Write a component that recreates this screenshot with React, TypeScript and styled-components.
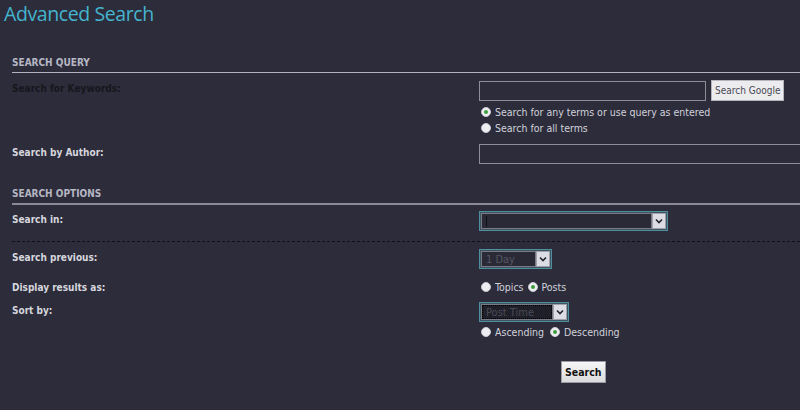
import React from "react";
import styled, { createGlobalStyle } from "styled-components";

const Global = createGlobalStyle`
  html, body { margin: 0; padding: 0; background: #2c2c3a; }
  body {
    width: 800px; height: 410px; overflow: hidden;
    font-family: "DejaVu Sans Condensed", "DejaVu Sans", sans-serif;
  }
`;

const Page = styled.div`
  width: 800px;
  height: 410px;
  background: #2c2c3a;
  overflow: hidden;
`;

const Title = styled.h1`
  margin: 0;
  padding: 0 0 0 4px;
  font-family: "Open Sans", sans-serif;
  font-weight: 400;
  font-size: 19.5px;
  line-height: 28px;
  color: #45b5cf;
  letter-spacing: -0.4px;
`;

const Form = styled.div`
  padding-left: 12px;
`;

const SectionHead = styled.div<{ $mt: number; $thick?: boolean }>`
  margin-top: ${(p) => p.$mt}px;
  font-size: 10px;
  font-weight: 700;
  line-height: 13px;
  text-transform: uppercase;
  color: #b6b6c4;
  padding-bottom: 3px;
  border-bottom: ${(p) => (p.$thick ? "2px solid #8a8a96" : "1px solid #b4b4c0")};
`;

const Row = styled.div<{ $mt: number }>`
  display: grid;
  grid-template-columns: 467px 1fr;
  margin-top: ${(p) => p.$mt}px;
`;

const Label = styled.div<{ $dark?: boolean }>`
  font-weight: 700;
  font-size: 10px;
  line-height: 14px;
  padding-top: 2px;
  color: ${(p) => (p.$dark ? "#16161d" : "#d6d6de")};
`;

const Field = styled.div`
  display: flex;
  flex-direction: column;
  align-items: flex-start;
`;

const InputLine = styled.div`
  display: flex;
  align-items: center;
  gap: 5px;
`;

const TextBox = styled.div<{ $w: number }>`
  box-sizing: border-box;
  width: ${(p) => p.$w}px;
  height: 20px;
  border: 1px solid #8e8e9a;
  background: transparent;
`;

const GoogleButton = styled.button`
  box-sizing: border-box;
  height: 21px;
  padding: 0 3px;
  background: #ececef;
  border: 1px solid #b4b4bc;
  color: #4a4a54;
  font-family: "DejaVu Sans Condensed", "DejaVu Sans", sans-serif;
  font-size: 10px;
`;

const RadioLine = styled.div<{ $mt?: number }>`
  display: flex;
  align-items: center;
  height: 16px;
  margin-top: ${(p) => p.$mt ?? 0}px;
  margin-left: 2px;
  font-size: 10.5px;
  color: #d2d2da;
`;

const Radio = styled.span<{ $on?: boolean; $ml?: number }>`
  box-sizing: border-box;
  width: 10px;
  height: 10px;
  border-radius: 50%;
  background: #eeeef2;
  border: 1px solid #c8c8d0;
  display: inline-flex;
  align-items: center;
  justify-content: center;
  margin-left: ${(p) => p.$ml ?? 0}px;
  margin-right: 4px;
  &::after {
    content: "";
    display: ${(p) => (p.$on ? "block" : "none")};
    width: 4px;
    height: 4px;
    border-radius: 50%;
    background: #3c9c3c;
  }
`;

const Select = styled.div<{ $w: number }>`
  box-sizing: border-box;
  width: ${(p) => p.$w}px;
  height: 20px;
  border: 1px solid #4f8e9e;
  padding: 1px;
  background: #3d5560;
  display: flex;
`;

const SelectInner = styled.div<{ $focus?: boolean }>`
  flex: 1;
  display: flex;
  align-items: center;
  background: ${(p) => (p.$focus ? "#1f1f29" : "#2a2a36")};
  border: 1px solid #7a7a86;
  outline: ${(p) => (p.$focus ? "1px dotted #000" : "none")};
  outline-offset: -2px;
  font-size: 11px;
  color: ${(p) => (p.$focus ? "#4a4a56" : "#555562")};
  padding-left: 4px;
  min-width: 0;
`;

const Caret = styled.span`
  display: inline-block;
  width: 1px;
  height: 11px;
  background: #0e0e14;
`;

const ArrowBox = styled.div`
  box-sizing: border-box;
  width: 14px;
  background: #dcdce4;
  border: 1px solid #a0a0aa;
  display: flex;
  align-items: center;
  justify-content: center;
`;

const Dashed = styled.div`
  margin-top: 10px;
  border-top: 1px dashed #101018;
`;

const SubmitRow = styled.div`
  margin-top: 21px;
  padding-left: 549px;
`;

const SubmitButton = styled.button`
  box-sizing: border-box;
  height: 22px;
  padding: 0 3px;
  background: linear-gradient(#f6f6f6, #dcdcdc);
  border: 1px solid #9a9aa2;
  font-family: "DejaVu Sans Condensed", "DejaVu Sans", sans-serif;
  font-weight: 700;
  font-size: 10.5px;
  color: #111;
`;

const Chevron = () => (
  <svg width="8" height="6" viewBox="0 0 8 6">
    <path d="M1 1.5 L4 4.5 L7 1.5" fill="none" stroke="#22222a" strokeWidth="1.6" />
  </svg>
);

const SelectBox = ({ w, text, focus, caret }: { w: number; text?: string; focus?: boolean; caret?: boolean }) => (
  <Select $w={w}>
    <SelectInner $focus={focus}>
      {caret ? <Caret /> : text}
    </SelectInner>
    <ArrowBox>
      <Chevron />
    </ArrowBox>
  </Select>
);

export default function App() {
  return (
    <Page>
      <Global />
      <Title>Advanced Search</Title>
      <Form>
        <SectionHead $mt={28}>Search Query</SectionHead>
        <Row $mt={7}>
          <Label $dark>Search for Keywords:</Label>
          <Field>
            <InputLine>
              <TextBox $w={227} />
              <GoogleButton>Search Google</GoogleButton>
            </InputLine>
            <RadioLine $mt={3}>
              <Radio $on />
              Search for any terms or use query as entered
            </RadioLine>
            <RadioLine>
              <Radio />
              Search for all terms
            </RadioLine>
          </Field>
        </Row>
        <Row $mt={8}>
          <Label>Search by Author:</Label>
          <Field>
            <TextBox $w={340} />
          </Field>
        </Row>
        <SectionHead $mt={23} $thick>
          Search Options
        </SectionHead>
        <Row $mt={6}>
          <Label>Search in:</Label>
          <Field>
            <SelectBox w={189} caret />
          </Field>
        </Row>
        <Dashed />
        <Row $mt={7}>
          <Label>Search previous:</Label>
          <Field>
            <SelectBox w={73} text="1 Day" />
          </Field>
        </Row>
        <Row $mt={10}>
          <Label>Display results as:</Label>
          <Field>
            <RadioLine>
              <Radio />
              Topics
              <Radio $on $ml={4} />
              Posts
            </RadioLine>
          </Field>
        </Row>
        <Row $mt={7}>
          <Label>Sort by:</Label>
          <Field>
            <SelectBox w={90} text="Post Time" focus />
            <RadioLine $mt={2}>
              <Radio />
              Ascending
              <Radio $on $ml={6} />
              Descending
            </RadioLine>
          </Field>
        </Row>
        <SubmitRow>
          <SubmitButton>Search</SubmitButton>
        </SubmitRow>
      </Form>
    </Page>
  );
}
